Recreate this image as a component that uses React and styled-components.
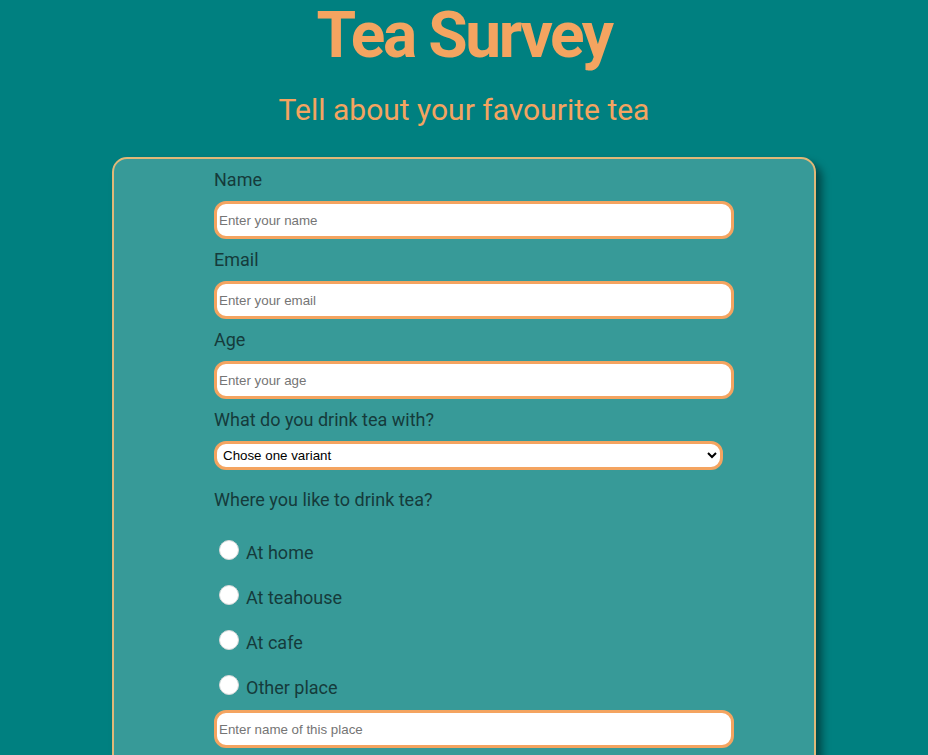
import React from 'react';
import styled, { createGlobalStyle } from 'styled-components';

const GlobalStyle = createGlobalStyle`
  body {
    margin: 0;
    background-color: #008080;
    font-family: Roboto, 'Noto Sans', sans-serif;
  }
`;

const places = ['At home', 'At teahouse', 'At cafe', 'Other place'];

const App = () => {
  return (
    <>
      <GlobalStyle />
      <Title>Tea Survey</Title>
      <Subtitle>Tell about your favourite tea</Subtitle>
      <Form onSubmit={(e) => e.preventDefault()}>
        <Label htmlFor="name">Name</Label>
        <TextInput id="name" type="text" placeholder="Enter your name" />
        <Label htmlFor="email">Email</Label>
        <TextInput id="email" type="email" placeholder="Enter your email" />
        <Label htmlFor="age">Age</Label>
        <TextInput id="age" type="number" placeholder="Enter your age" />
        <Label htmlFor="with">What do you drink tea with?</Label>
        <Select id="with" defaultValue="">
          <option value="" disabled>Chose one variant</option>
          <option>Milk</option>
          <option>Sugar</option>
          <option>Lemon</option>
        </Select>
        <Label $spaced>Where you like to drink tea?</Label>
        <RadioGroup>
          {places.map((place) => (
            <RadioRow key={place}>
              <Radio type="radio" name="place" value={place} />
              {place}
            </RadioRow>
          ))}
        </RadioGroup>
        <TextInput type="text" placeholder="Enter name of this place" />
      </Form>
    </>
  );
};

const Title = styled.h1`
  margin: 0;
  text-align: center;
  font-size: 64px;
  line-height: 71px;
  font-weight: 700;
  letter-spacing: -2.4px;
  color: #f4a460;
`;

const Subtitle = styled.h2`
  margin: 21px 0 30px;
  text-align: center;
  font-size: 30px;
  font-weight: 400;
  color: #f4a460;
`;

const Form = styled.form`
  width: 600px;
  margin: 0 auto;
  padding: 10px 0 40px 100px;
  background-color: #379a98;
  border: 2px solid #e0b878;
  border-radius: 15px;
  box-shadow: 6px 6px 8px rgba(0, 0, 0, 0.45);
`;

const Label = styled.label`
  display: block;
  margin: ${(p) => (p.$spaced ? '19px' : '0')} 0 11px;
  font-size: 18px;
  color: #153b3b;
`;

const TextInput = styled.input`
  display: block;
  box-sizing: border-box;
  width: 520px;
  height: 38px;
  margin: 0 0 10px;
  padding: 0 2px;
  border: 3px solid #f4a460;
  border-radius: 12px;
  background: #ffffff;
  font-family: 'Liberation Sans', Arial, sans-serif;
  font-size: 13.33px;
  outline: none;

  &::placeholder {
    color: #757575;
  }
`;

const Select = styled.select`
  display: block;
  box-sizing: border-box;
  width: 509px;
  height: 29px;
  margin: 0;
  padding: 0 2px;
  border: 3px solid #f4a460;
  border-radius: 12px;
  background: #ffffff;
  color: #000000;
  font-family: 'Liberation Sans', Arial, sans-serif;
  font-size: 13.33px;
  outline: none;
`;

const RadioGroup = styled.div`
  padding-top: 21px;
`;

const RadioRow = styled.label`
  display: flex;
  align-items: flex-start;
  height: 21px;
  margin-bottom: 24px;
  font-size: 18px;
  color: #153b3b;

  &:last-child {
    margin-bottom: 12px;
  }
`;

const Radio = styled.input`
  appearance: none;
  width: 20px;
  height: 20px;
  margin: -2px 7px 0 5px;
  border: 1px solid #d8d8d8;
  border-radius: 50%;
  background: #ffffff;
  flex-shrink: 0;

  &:checked {
    background: radial-gradient(circle, #1a73e8 0 5px, #ffffff 6px);
  }
`;

export default App;
